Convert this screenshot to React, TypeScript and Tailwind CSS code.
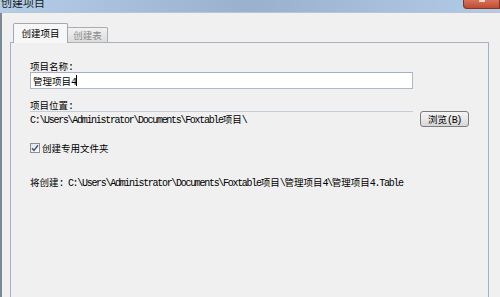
import React from "react";

const cjk = '"Noto Sans CJK SC", "Noto Sans", sans-serif';
const mono = '"Liberation Mono", "Noto Sans CJK SC", monospace';

// SimSun style text: CJK runs full width, ASCII runs half width
const MixedText = ({ text, className = "" }: { text: string; className?: string }) => {
	const parts = text.split(/([\u4e00-\u9fff]+)/).filter((p) => p !== "");
	return (
		<span className={`block whitespace-pre h-[12px] leading-[12px] text-[10px] ${className}`}>
			{parts.map((p, i) =>
				/[\u4e00-\u9fff]/.test(p) ? (
					<span key={i} className="text-[9.5px] leading-[12px]" style={{ fontFamily: cjk }}>
						{p}
					</span>
				) : (
					<span key={i} className="text-[10px] leading-[12px] tracking-[-1.3px]" style={{ fontFamily: mono }}>
						{p}
					</span>
				)
			)}
		</span>
	);
};

const CheckBox = () => (
	<span className="w-[10px] h-[10px] border border-[#8e8f8f] bg-linear-to-br from-[#e4e4e4] to-[#ffffff] flex items-center justify-center">
		<svg width="8" height="8" viewBox="0 0 8 8">
			<path d="M1 4.2 L3 6.4 L7 1.2" fill="none" stroke="#3b4f8a" strokeWidth="1.4" />
		</svg>
	</span>
);

const App = () => {
	return (
		<div className="w-[500px] h-[297px] overflow-hidden bg-[#f0f0f0] flex flex-col text-black text-[10px] leading-[12px]">
			{/* title bar */}
			<div className="h-[12px] flex justify-between overflow-hidden bg-linear-to-r from-[#b4cee9] via-[#98b2cd] to-[#b2cce7]">
				<span className="-mt-[5px] pl-[1px] text-[11px] leading-[14px] text-[#1a1a1a]" style={{ fontFamily: cjk }}>
					创建项目
				</span>
				<div className="w-[37px] h-[9px] bg-linear-to-b from-[#d8735c] to-[#c04a30] border border-t-0 border-[#8a3422] rounded-bl-[4px] flex justify-center">
					<span className="w-[6px] h-[2px] bg-[#f4d6cc]"></span>
				</div>
			</div>
			<div className="h-[1px] bg-[#b9c6d3]"></div>

			{/* body */}
			<div className="flex-1 flex flex-col border-l-2 border-[#7b8896] pl-[8px] pr-[11px] pt-[10px]">
				{/* tabs */}
				<div className="flex items-end h-[19px] ml-[3px]">
					<div className="w-[55px] h-[20px] -mb-[1px] relative z-10 border border-b-0 border-[#a3a9b0] rounded-t-[2px] bg-[#f7f7f7] flex items-center justify-center pb-[1px]">
						<MixedText text="创建项目" />
					</div>
					<div className="w-[40px] h-[15px] border border-l-0 border-b-0 border-[#a9aeb4] rounded-tr-[2px] bg-linear-to-b from-[#f2f2f2] to-[#dcdcdc] flex items-center justify-center text-[#8a8a8a]">
						<MixedText text="创建表" />
					</div>
				</div>

				{/* panel */}
				<div className="flex-1 border border-b-0 border-[#a8b1bc] border-r-[#9fb2c8] pl-[19px] pt-[17px] flex flex-col items-start">
					<MixedText text="项目名称:" />
					<div className="w-[383px] h-[17px] border border-[#abb8c6] border-t-[#a2b1c1] bg-[#ffffff] flex items-center pl-[2px]">
						<MixedText text="管理项目4" />
						<span className="w-[1px] h-[11px] bg-black"></span>
					</div>

					<MixedText text="项目位置:" className="mt-[10px]" />
					<div className="flex items-start">
						<div className="w-[383px] border-t border-[#c3cdd7] pt-[1px]">
							<MixedText text="C:\Users\Administrator\Documents\Foxtable项目\" />
						</div>
						<button className="ml-[7px] w-[49px] h-[16px] border border-[#7c7c7c] rounded-[3px] bg-linear-to-b from-[#f4f4f4] via-[#e8e8e8] to-[#d6d6d6] flex items-center justify-center">
							<MixedText text="浏览(B)" />
						</button>
					</div>

					<div className="mt-[15px] flex items-center gap-[2px]">
						<CheckBox />
						<MixedText text="创建专用文件夹" />
					</div>

					<MixedText text="将创建: C:\Users\Administrator\Documents\Foxtable项目\管理项目4\管理项目4.Table" className="mt-[22px]" />
				</div>
			</div>
		</div>
	);
};

export default App;
